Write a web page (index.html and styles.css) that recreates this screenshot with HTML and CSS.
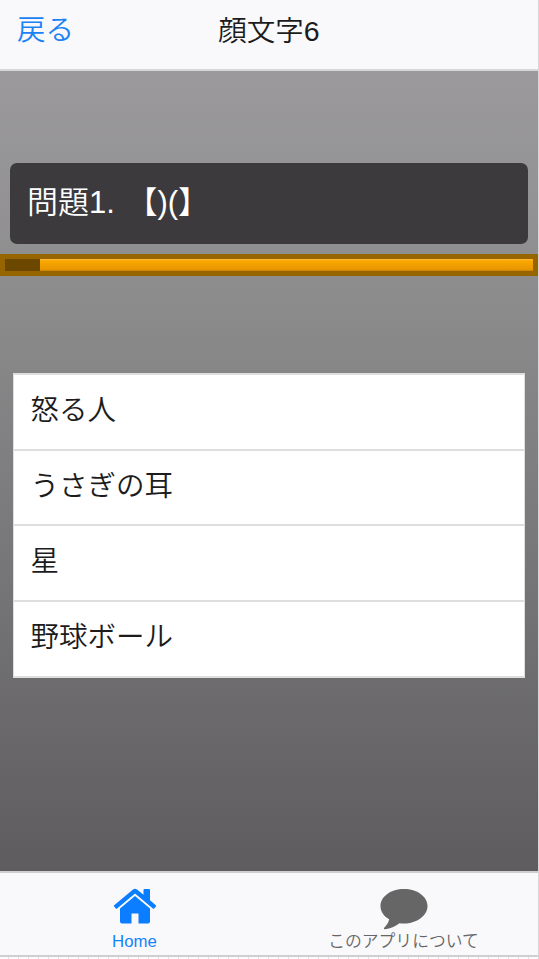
FILE: index.html
```html
<!DOCTYPE html>
<html lang="ja">
<head>
<meta charset="utf-8">
<title>顔文字6</title>
<link rel="stylesheet" href="styles.css">
</head>
<body>
<div class="app">
  <header class="navbar">
    <a class="back">戻る</a>
    <h1 class="title">顔文字6</h1>
    <span></span>
  </header>
  <main class="content">
    <div class="question">問題1. 【)(】</div>
    <div class="progress"><div class="track"><div class="elapsed"></div></div></div>
    <ul class="answers">
      <li>怒る人</li>
      <li>うさぎの耳</li>
      <li>星</li>
      <li>野球ボール</li>
    </ul>
  </main>
  <nav class="tabbar">
    <a class="tab active">
      <svg class="home" viewBox="0 0 44 36" width="44" height="36"><path d="M1.2 17.2 20 1.4Q22-.1 24 1.400L30.500 6.800V2Q30.500 1 31.500 1H36Q37 1 37 2V12.200L42.800 17.200Q43.400 17.700 42.900 18.400L41.200 20.500Q40.600 21 39.900 20.500L22 5.500 4.100 20.500Q3.400 21 2.800 20.500L1.100 18.400Q.6 17.700 1.200 17.200Z"/><path d="M22 8 37 20.400V33.500Q37 35.500 35 35.500H25.500V25.500H18.500V35.500H9Q7 35.500 7 33.500V20.400Z"/></svg>
      <span class="label">Home</span>
    </a>
    <a class="tab">
      <svg class="chat" viewBox="0 0 48 42" width="48" height="42"><path d="M24 1C37 1 47.500 8.500 47.500 18S37 35.500 24 35.500Q21.500 35.500 19.500 35.200C15 38.500 10.500 40.700 5 41.200Q3.500 41.300 4 40C6.500 37.500 8.500 35 9.200 31.300C3.700 28.200.5 23.500.5 18C.5 8.500 11 1 24 1Z"/></svg>
      <span class="label">このアプリについて</span>
    </a>
  </nav>
  <div class="grid"></div>
</div>
</body>
</html>
```
FILE: styles.css
```css
* { box-sizing: border-box; }
body {
  margin: 0;
  background: #d8d7d9;
  color: #1c1c1c;
  font-family: "Liberation Sans", "Noto Sans CJK JP", sans-serif;
  font-weight: 350;
}
.app {
  width: 538px;
  height: 959px;
  display: flex;
  flex-direction: column;
}
.navbar {
  height: 71px;
  flex: none;
  display: grid;
  grid-template-columns: 1fr auto 1fr;
  align-items: start;
  background: #f9f8fa;
  border-bottom: 2px solid #d6d5d7;
}
.back {
  padding: 9px 0 0 17px;
  font-size: 28.5px;
  line-height: 42px;
  color: #1a82f7;
}
.title {
  margin: 0;
  padding-top: 10px;
  font-size: 28.5px;
  font-weight: 350;
  line-height: 42px;
}
.content {
  flex: 1;
  padding-top: 92px;
  background: linear-gradient(#9b999c, #8e8e8f 25%, #5e5c5f);
}
.question {
  height: 81px;
  margin: 0 10px;
  padding-left: 17px;
  border-radius: 7px;
  background: #3c3a3c;
  color: #fff;
  font-size: 31px;
  line-height: 80px;
  word-spacing: 3px;
}
.progress {
  height: 22px;
  margin-top: 10px;
  padding: 5px;
  background: #976500;
}
.track {
  height: 12px;
  background: linear-gradient(#ffb92e, #f7a600 20%, #e99800 85%, #c98200);
}
.elapsed {
  width: 35px;
  height: 12px;
  background: #6c4700;
}
.answers {
  list-style: none;
  margin: 97px 13px 0;
  padding: 0;
  width: 512px;
  height: 305px;
  border: 1px solid #dededf;
  border-top-width: 2px;
  background: #fff;
}
.answers li {
  height: 75.700px;
  padding-left: 16.500px;
  border-bottom: 2px solid #dededf;
  font-size: 28.5px;
  line-height: 70px;
}
.tabbar {
  height: 86px;
  flex: none;
  display: grid;
  grid-template-columns: 1fr 1fr;
  background: #f9f8fa;
  border-top: 2px solid #cecdd0;
  border-bottom: 2px solid #cfced0;
}
.tab {
  display: flex;
  flex-direction: column;
  align-items: center;
  color: #666;
  fill: #666;
}
.active {
  color: #1583fa;
  fill: #0b7eff;
}
.home { margin: 15px 0 6px; }
.chat { margin: 15px 0 0; }
.label {
  font-size: 16.8px;
  line-height: 24px;
}
.grid {
  height: 2px;
  flex: none;
  background: repeating-linear-gradient(90deg, #fcfcfc 0 8px, #dedede 8px 9px, #fcfcfc 9px 10px);
}
```
